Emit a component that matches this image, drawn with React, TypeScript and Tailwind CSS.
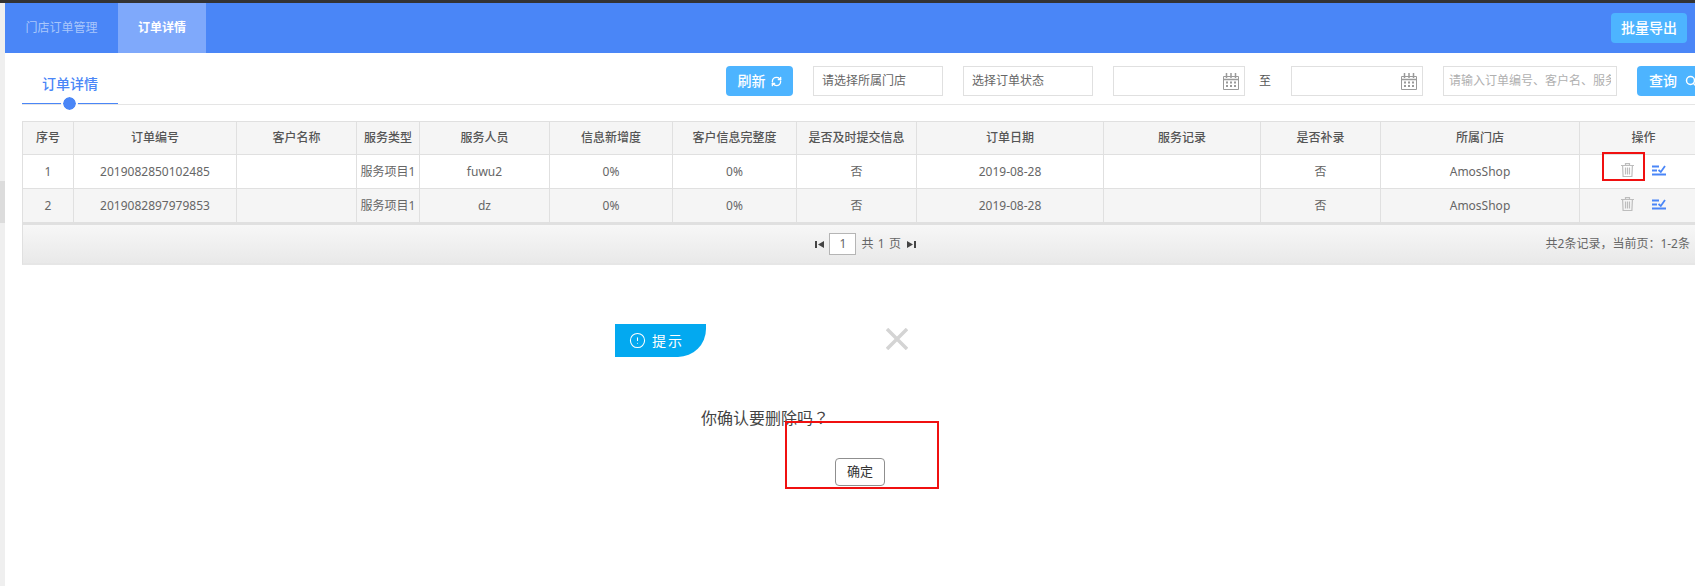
import { AlertCircle, RefreshCw, Search } from "lucide-react";

const font = "font-['Noto_Sans','Noto_Sans_CJK_SC',sans-serif]";

const columns = [
  { title: "序号", w: "w-[51px]" },
  { title: "订单编号", w: "w-[163px]" },
  { title: "客户名称", w: "w-[120px]" },
  { title: "服务类型", w: "w-[63px]" },
  { title: "服务人员", w: "w-[130px]" },
  { title: "信息新增度", w: "w-[123px]" },
  { title: "客户信息完整度", w: "w-[124px]" },
  { title: "是否及时提交信息", w: "w-[120px]" },
  { title: "订单日期", w: "w-[187px]" },
  { title: "服务记录", w: "w-[157px]" },
  { title: "是否补录", w: "w-[120px]" },
  { title: "所属门店", w: "w-[199px]" },
  { title: "操作", w: "w-[128px]" },
];

const rows = [
  { no: "1", order: "2019082850102485", staff: "fuwu2", stripe: false },
  { no: "2", order: "2019082897979853", staff: "dz", stripe: true },
];

function CalendarIcon() {
  return (
    <svg width="16" height="17" viewBox="0 0 16 17" fill="none" stroke="#9a9a9a">
      <path d="M.5 3.5h15v13H.5z" />
      <path d="M3.5 0v5M12.5 0v5M8 0v5" strokeWidth="1.5" />
      <path d="M.5 6.5h15" strokeWidth="1.5" />
      <path d="M3 9.5h2M7 9.5h2M11 9.5h2M3 13h2M7 13h2M11 13h2" strokeWidth="2" />
    </svg>
  );
}

function TrashIcon() {
  return (
    <svg width="13" height="14" viewBox="0 0 13 14" fill="none" stroke="#bdbdbd" strokeWidth="1.2">
      <path d="M0 2.5h13M4.5 2.5V.6h4v1.9" />
      <path d="M1.6 2.5l.5 11h8.8l.5-11" />
      <path d="M4.5 4.5v7M6.5 4.5v7M8.5 4.5v7" />
    </svg>
  );
}

function CheckListIcon() {
  return (
    <svg width="14" height="11" viewBox="0 0 14 11" fill="none" stroke="#4a86f7" strokeWidth="1.8">
      <path d="M0 1.5h7M0 5.5h5M0 9.5h14" />
      <path d="M6.5 5l2.3 2L13 1" />
    </svg>
  );
}

function PagerArrow({ flip }: { flip?: boolean }) {
  return (
    <svg width="9" height="7" viewBox="0 0 9 7" fill="#444" className={flip ? "rotate-180" : ""}>
      <path d="M0 0h2v7H0zM9 0v7L3 3.5z" />
    </svg>
  );
}

function Field({ w, children }: { w: string; children?: React.ReactNode }) {
  return (
    <div className={`${w} flex h-[30px] shrink-0 items-center justify-between overflow-hidden border border-[#e0e0e0] bg-white pl-[8px] pr-[5px] text-xs text-[#666]`}>
      {children}
    </div>
  );
}

export default function App() {
  return (
    <div className={`${font} relative flex h-[586px] w-[1695px] flex-col overflow-hidden bg-white`}>
      <div className="h-[3px] shrink-0 bg-[#333]" />
      <div className="flex min-h-0 flex-1">
        {/* Scrollbar strip */}
        <div className="w-[5px] shrink-0 bg-[#efefef] pt-[178px]">
          <div className="h-[42px] bg-[#dcdcdc]" />
        </div>

        <div className="min-w-0 flex-1">
          {/* Tabs */}
          <div className="flex h-[50px] items-center bg-[#4a86f7] pr-2">
            <div className="flex h-full w-[113px] items-center justify-center text-xs text-[#a9c6fb]">门店订单管理</div>
            <div className="flex h-full w-[88px] items-center justify-center bg-[#7fa9fb] text-xs font-bold text-white">订单详情</div>
            <button className="ml-auto h-[30px] w-[76px] rounded-sm bg-[#4db4ff] text-sm font-medium text-white">批量导出</button>
          </div>

          {/* Toolbar */}
          <div className="relative ml-[17px] flex h-[52px] items-start border-b border-[#e5e5e5]">
            <div className="relative -mb-px h-full w-[96px] shrink-0 border-b border-[#4a86f7]">
              <div className="pl-[20px] pt-[21px] text-sm font-medium leading-5 text-[#4a86f7]">订单详情</div>
              <div className="absolute -bottom-[7px] left-[41px] h-[13px] w-[13px] rounded-full bg-[#4a86f7] outline-2 outline-white" />
            </div>
            <div className="ml-[608px] flex shrink-0 items-start pt-[13px]">
              <button className="flex h-[30px] w-[67px] items-center justify-center gap-[5px] rounded-sm bg-[#4db4ff] text-sm font-medium text-white">
                刷新
                <RefreshCw size={11} strokeWidth={3} />
              </button>
              <div className="ml-5 flex gap-5">
                <Field w="w-[130px]">请选择所属门店</Field>
                <Field w="w-[130px]">选择订单状态</Field>
                <Field w="w-[132px]">
                  <span />
                  <CalendarIcon />
                </Field>
              </div>
              <div className="flex h-[30px] w-[46px] shrink-0 items-center justify-center pr-[6px] text-xs text-[#555]">至</div>
              <Field w="w-[132px]">
                <span />
                <CalendarIcon />
              </Field>
              <div className="ml-5">
                <Field w="w-[174px]">
                  <span className="-ml-[3px] w-[162px] shrink-0 overflow-hidden text-[#b0b0b0] whitespace-nowrap">请输入订单编号、客户名、服务人员</span>
                </Field>
              </div>
              <button className="ml-5 flex h-[30px] w-[70px] shrink-0 items-center gap-2 rounded-sm bg-[#4db4ff] pl-3 text-sm font-medium text-white">
                查询
                <Search size={12} strokeWidth={3} />
              </button>
            </div>
          </div>

          {/* Order table */}
          <div className="ml-[17px] mt-4 overflow-hidden">
            <table className="w-[1685px] table-fixed border-collapse text-center text-xs text-[#666]">
              <colgroup>
                {columns.map((c) => (
                  <col key={c.title} className={c.w} />
                ))}
              </colgroup>
              <thead>
                <tr className="h-[33px] bg-[#f5f5f5]">
                  {columns.map((c) => (
                    <th key={c.title} className="border border-[#e0e0e0] p-0 font-medium whitespace-nowrap text-[#555]">
                      {c.title}
                    </th>
                  ))}
                </tr>
              </thead>
              <tbody>
                {rows.map((r) => (
                  <tr key={r.no} className={`h-[34px] ${r.stripe ? "bg-[#f5f5f5]" : "bg-white"}`}>
                    <td className="border border-[#e0e0e0] p-0">{r.no}</td>
                    <td className="border border-[#e0e0e0] p-0">{r.order}</td>
                    <td className="border border-[#e0e0e0] p-0" />
                    <td className="border border-[#e0e0e0] p-0 whitespace-nowrap">服务项目1</td>
                    <td className="border border-[#e0e0e0] p-0">{r.staff}</td>
                    <td className="border border-[#e0e0e0] p-0">0%</td>
                    <td className="border border-[#e0e0e0] p-0">0%</td>
                    <td className="border border-[#e0e0e0] p-0">否</td>
                    <td className="border border-[#e0e0e0] p-0">2019-08-28</td>
                    <td className="border border-[#e0e0e0] p-0" />
                    <td className="border border-[#e0e0e0] p-0">否</td>
                    <td className="border border-[#e0e0e0] p-0">AmosShop</td>
                    <td className="border border-[#e0e0e0] p-0">
                      <div className="flex items-center gap-[18px] pb-[3px] pl-[41px]">
                        <TrashIcon />
                        <CheckListIcon />
                      </div>
                    </td>
                  </tr>
                ))}
              </tbody>
            </table>

            {/* Pager */}
            <div className="relative flex h-[42px] items-center justify-center border-y-2 border-l border-t-[#e0e0e0] border-b-[#e6e6e6] border-l-[#e0e0e0] bg-gradient-to-b from-[#f7f7f7] to-[#e9e9e9] text-xs text-[#666]">
              <div className="flex items-center gap-[5px] pl-[13px]">
                <PagerArrow />
                <span className="flex h-[22px] w-[27px] items-center justify-center border border-[#b5b5b5] bg-white">1</span>
                <span className="tracking-[0.6px]">共 1 页</span>
                <PagerArrow flip />
              </div>
              <span className="absolute right-[5px] top-[11px]">共2条记录，当前页：1-2条</span>
            </div>
          </div>

          {/* Confirm dialog */}
          <div className="relative ml-[610px] mt-[59px] w-[340px]">
            <div className="flex h-[33px] w-[91px] items-center gap-[6px] rounded-br-[28px] bg-[#03a9f0] pl-[14px] text-sm tracking-[2px] text-white">
              <AlertCircle size={17} strokeWidth={1.5} />
              提示
            </div>
            <svg className="absolute left-[271px] top-1" width="22" height="22" viewBox="0 0 22 22" stroke="#d4d4d4" strokeWidth="3.5">
              <path d="M1 1l20 20M21 1L1 21" />
            </svg>
            <p className="ml-[86px] mt-[49px] text-base leading-[22px] text-[#444]">
              你确认要删除吗<span className="font-['Noto_Sans_CJK_TC',sans-serif]">？</span>
            </p>
            <button className="ml-[220px] mt-[29px] flex h-[28px] w-[50px] items-center justify-center rounded-sm border border-[#8f8f8f] bg-white text-[13px] text-[#333]">确定</button>
            {/* Annotation box */}
            <div className="absolute left-[170px] top-[97px] h-[68px] w-[154px] border-2 border-[#f01010]" />
          </div>
        </div>
      </div>

      {/* Annotation box on the delete icon */}
      <div className="absolute left-[1602px] top-[152px] h-[29px] w-[43px] border-2 border-[#f01010]" />
    </div>
  );
}
